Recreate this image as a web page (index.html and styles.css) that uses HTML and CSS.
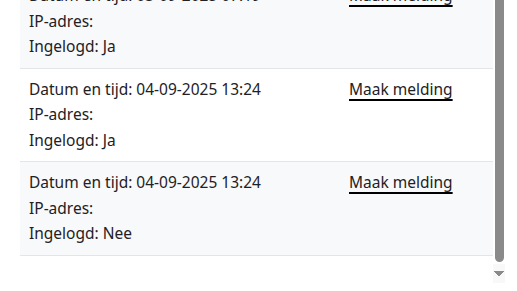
FILE: index.html
```html
<!DOCTYPE html>
<html lang="nl">
<head>
    <meta charset="UTF-8">
    <meta name="viewport" content="width=device-width, initial-scale=1.0">
    <title>Inloggeschiedenis</title>
    <link rel="stylesheet" href="styles.css">
</head>
<body>

    <div class="log-window">
        <div class="log-panel" id="logPanel">
            <div class="log-list">
                <div class="log-row">
                    <div class="log-info">
                        <div>Datum en tijd: 03-09-2025 07:19</div>
                        <div>IP-adres: <span class="ip"></span></div>
                        <div>Ingelogd: Ja</div>
                    </div>
                    <a href="#" class="report-link">Maak melding</a>
                </div>
                <div class="log-row">
                    <div class="log-info">
                        <div>Datum en tijd: 04-09-2025 13:24</div>
                        <div>IP-adres: <span class="ip"></span></div>
                        <div>Ingelogd: Ja</div>
                    </div>
                    <a href="#" class="report-link">Maak melding</a>
                </div>
                <div class="log-row">
                    <div class="log-info">
                        <div>Datum en tijd: 04-09-2025 13:24</div>
                        <div>IP-adres: <span class="ip"></span></div>
                        <div>Ingelogd: Nee</div>
                    </div>
                    <a href="#" class="report-link">Maak melding</a>
                </div>
            </div>
        </div>

        <div class="scroll-rail" aria-hidden="true">
            <div class="scroll-thumb"></div>
            <div class="scroll-arrow"></div>
        </div>
    </div>

    <script>
        // Start at the newest entries (bottom of the list)
        const panel = document.getElementById('logPanel');
        panel.scrollTop = panel.scrollHeight;
    </script>

</body>
</html>
```

FILE: styles.css
```css
body {
    font-family: "Noto Sans", "Open Sans", sans-serif;
    background-color: #ffffff;
    color: #1e2125;
    margin: 0;
    font-size: 15.5px;
    line-height: 25.5px;
}

.log-window {
    display: flex;
    margin-left: 20px;
    width: 485px;
    height: 283px;
}

.log-panel {
    flex: 1;
    overflow-y: scroll;
    scrollbar-width: none;
}

.log-panel::-webkit-scrollbar {
    display: none;
}

.log-list {
    padding-bottom: 27px;
}

.log-row {
    display: grid;
    grid-template-columns: 320px 1fr;
    padding: 8px 9px 8px;
    border-bottom: 1px solid #e3e5e7;
}

.log-row:nth-child(odd) {
    background-color: #f8f9fa;
}

.report-link {
    justify-self: start;
    color: #1e2125;
    text-decoration: underline;
    text-decoration-color: #000000;
    text-decoration-thickness: 2px;
    text-underline-offset: 4px;
}

.ip {
    color: #6c757d;
}

.scroll-rail {
    width: 12px;
    display: flex;
    flex-direction: column;
}

.scroll-thumb {
    flex: 1;
    margin: 0 1px 2px 2px;
    background-color: #8a8a8a;
    border-radius: 0 0 5px 5px;
}

.scroll-arrow {
    height: 19px;
    background: conic-gradient(from -40deg at 50% 100%, #8a8a8a 80deg, transparent 0) 50% 55% / 10px 6px no-repeat, #f8f8f8;
}
```
